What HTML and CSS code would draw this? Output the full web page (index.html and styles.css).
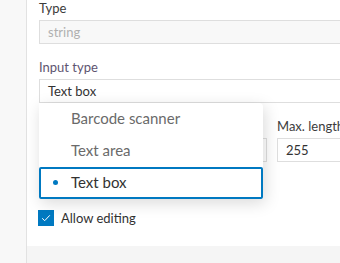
FILE: index.html
```
<!DOCTYPE html>
<html>
<head>
<meta charset="utf-8">
<link rel="stylesheet" href="styles.css">
</head>
<body>
<div class="page">
  <div class="side"></div>
  <div class="main">
    <div class="form">
      <div class="field">
        <div class="label">Type</div>
        <div class="input disabled">string</div>
      </div>
      <div class="field select-field">
        <div class="label label-alt">Input type</div>
        <div class="input">Text box</div>
        <ul class="menu">
          <li class="item">Barcode scanner</li>
          <li class="item">Text area</li>
          <li class="item selected"><span class="dot"></span>Text box</li>
        </ul>
      </div>
      <div class="row">
        <div class="field">
          <div class="label">&nbsp;</div>
          <div class="input"></div>
        </div>
        <div class="field">
          <div class="label">Max. length</div>
          <div class="input">255</div>
        </div>
      </div>
      <label class="check">
        <span class="box"><svg width="16" height="16" viewBox="0 0 16 16"><path d="M4.2 8.3 L6.7 10.7 L11.8 5.3" fill="none" stroke="#fff" stroke-width="1"/></svg></span>
        <span class="check-text">Allow editing</span>
      </label>
    </div>
  </div>
</div>
</body>
</html>
```
FILE: styles.css
```
* { box-sizing: border-box; }
html, body { margin: 0; padding: 0; }
body {
  font-family: "Lato", "Noto Sans", sans-serif;
  color: #323232;
  background: #f5f5f5;
}
.page {
  display: flex;
  width: 340px;
  height: 263px;
  overflow: hidden;
  background: #f5f5f5;
}
.side {
  flex: none;
  width: 27px;
  background: #f8f8f8;
  border-right: 1px solid #e2e2e2;
}
.main {
  flex: none;
  width: 520px;
  height: 246px;
  background: #fff;
  padding: 0 0 0 12px;
}
.form {
  width: 466px;
  display: flex;
  flex-direction: column;
  gap: 15px;
}
.field {
  display: flex;
  flex-direction: column;
  gap: 4px;
  position: relative;
}
.label {
  font-size: 13px;
  line-height: 16px;
  color: #3c3c3c;
}
.label-alt { color: #5e5470; }
.input {
  height: 24px;
  border: 1px solid #dedede;
  background: #fff;
  font-size: 13px;
  line-height: 22px;
  padding: 0 8px;
  color: #323232;
}
.input.disabled {
  background: #f8f8f8;
  color: #b0b0b0;
}
.row {
  display: grid;
  grid-template-columns: 228px 228px;
  gap: 10px;
}
.menu {
  position: absolute;
  top: 100%;
  left: 0;
  width: 224px;
  margin: 0;
  padding: 0;
  list-style: none;
  background: #fff;
  border-radius: 0 4px 0 0;
  box-shadow: 2px 4px 16px rgba(0,0,0,0.15);
  z-index: 2;
}
.item {
  height: 32px;
  padding-left: 32px;
  font-size: 15px;
  line-height: 30px;
  color: #6a6a6a;
  position: relative;
}
.item.selected {
  color: #323232;
  border: 2px solid #0079c1;
  border-radius: 2px;
  line-height: 27px;
  padding-left: 30px;
}
.dot {
  position: absolute;
  left: 12px;
  top: 11px;
  width: 5px;
  height: 5px;
  border-radius: 50%;
  background: #0079c1;
}
.check {
  display: flex;
  align-items: center;
  gap: 7px;
  margin-top: 33px;
  margin-left: -1px;
}
.box {
  width: 16px;
  height: 16px;
  background: #0079c1;
  display: block;
}
.box svg { display: block; }
.check-text {
  font-size: 13px;
  line-height: 16px;
  color: #323232;
}
```
